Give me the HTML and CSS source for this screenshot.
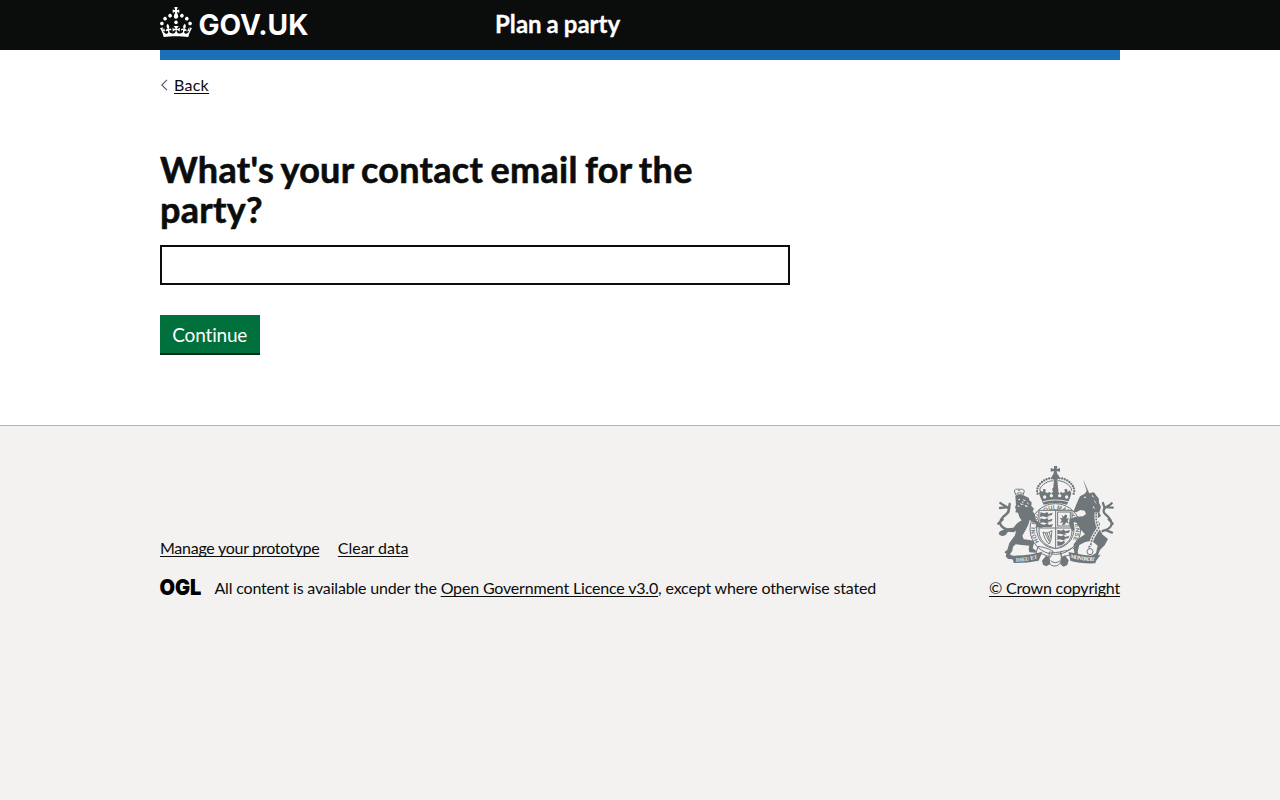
FILE: index.html
```html
<!DOCTYPE html>
<html lang="en">
<head>
<meta charset="utf-8">
<title>What's your contact email for the party? – Plan a party – GOV.UK</title>
<link rel="stylesheet" href="styles.css">
</head>
<body>
<header class="header">
  <div class="container header-inner">
    <a class="header-logo" href="#" aria-label="GOV.UK">
      <svg width="150" height="30" viewBox="0 0 150 30" fill="currentColor">
        <path d="M22.6 10.4c-1 .4-2-.1-2.4-1-.4-.9.1-2 1-2.4.9-.4 2 .1 2.4 1s-.1 2-1 2.4m-5.9 6.7c-.9.4-2-.1-2.4-1-.4-.9.1-2 1-2.4.9-.4 2 .1 2.4 1s-.1 2-1 2.4m10.8-3.7c-1 .4-2-.1-2.4-1-.4-.9.1-2 1-2.4.9-.4 2 .1 2.4 1s0 2-1 2.4m3.3 4.8c-1 .4-2-.1-2.4-1-.4-.9.1-2 1-2.4.9-.4 2 .1 2.4 1s-.1 2-1 2.4M17 4.7l2.3 1.2V2.5l-2.3.7-.2-.2.9-3h-3.4l.9 3-.2.2c-.1.1-2.3-.7-2.3-.7v3.4L15 4.7c.1.1.1.2.2.2l-1.3 4c-.1.2-.1.4-.1.6 0 1.1.8 2 1.9 2.2h.7c1-.2 1.9-1.1 1.9-2.1 0-.2 0-.4-.1-.6l-1.3-4c-.1-.2 0-.2.1-.3m-7.6 5.7c.9.4 2-.1 2.4-1 .4-.9-.1-2-1-2.4-.9-.4-2 .1-2.4 1s0 2 1 2.4m-5 3c.9.4 2-.1 2.4-1 .4-.9-.1-2-1-2.4-.9-.4-2 .1-2.4 1s.1 2 1 2.4m-3.2 4.8c.9.4 2-.1 2.4-1 .4-.9-.1-2-1-2.4-.9-.4-2 .1-2.4 1s0 2 1 2.4m14.8 11c4.4 0 8.6.3 12.3.8 1.1-4.5 2.4-7 3.7-8.8l-2.5-.9c.2 1.3.3 1.9 0 2.7-.4-.4-.8-1.1-1.1-2.3l-1.2 4c.7-.5 1.3-.8 2-.9-1.1 2.5-2.6 3.1-3.5 3-1.1-.2-1.7-1.2-1.5-2.1.3-1.2 1.5-1.5 2.1-.1 1.1-2.3-.8-3-2-2.3 1.9-1.9 2.1-3.5.6-5.6-2.1 1.6-2.1 3.2-1.2 5.5-1.2-1.4-3.2-.6-2.5 1.6.9-1.4 2.1-.5 1.9.8-.2 1.1-1.7 2.1-3.5 1.9-2.7-.2-2.9-2.1-2.9-3.6.7-.1 1.9.5 2.9 1.9l.4-4.3c-1.1 1.1-2.1 1.4-3.2 1.4.4-1.2 2.1-3 2.1-3h-5.4s1.7 1.9 2.1 3c-1.1 0-2.1-.2-3.2-1.4l.4 4.3c1-1.4 2.2-2 2.9-1.9-.1 1.5-.2 3.4-2.9 3.6-1.9.2-3.4-.8-3.5-1.9-.2-1.3 1-2.2 1.9-.8.7-2.3-1.2-3-2.5-1.6.9-2.2.9-3.9-1.2-5.5-1.5 2-1.3 3.7.6 5.6-1.2-.7-3.1 0-2 2.3.6-1.4 1.8-1.1 2.1.1.2.9-.3 1.9-1.5 2.1-.9.2-2.4-.5-3.5-3 .6 0 1.2.3 2 .9l-1.2-4c-.3 1.1-.7 1.9-1.1 2.3-.3-.8-.2-1.4 0-2.7l-2.9.9C1.3 23 2.6 25.5 3.7 30c3.7-.5 7.9-.8 12.3-.8"/>
        <text class="wordmark" x="38.4" y="28" textLength="110" lengthAdjust="spacingAndGlyphs">GOV.UK</text>
      </svg>
    </a>
    <a class="header-service" href="#">Plan a party</a>
  </div>
</header>
<div class="container page">
  <a class="back" href="#"><svg class="chevron" width="8" height="12" viewBox="0 0 8 12" fill="none" stroke="#505a5f" stroke-width="1.1"><path d="M7 .8 1.8 6 7 11.2"/></svg><span class="link">Back</span></a>
  <main class="main">
    <h1 class="title"><label for="email">What's your contact email for the party?</label></h1>
    <input class="input" id="email" type="text">
    <button class="button">Continue</button>
  </main>
</div>
<footer class="footer">
  <div class="container footer-inner">
    <div class="footer-meta">
      <div class="footer-links"><a class="link manage" href="#">Manage your prototype</a><a class="link clear" href="#">Clear data</a></div>
      <div class="licence">
        <svg class="ogl" width="42" height="18" viewBox="0 0 42 18"><text class="ogl-text" x="-.6" y="17" textLength="42" lengthAdjust="spacingAndGlyphs">OGL</text></svg>
        <span class="licence-text">All content is available under the <a class="link" href="#">Open Government Licence v3.0</a>, except where otherwise stated</span>
      </div>
    </div>
    <a class="copyright" href="#">
      <svg class="arms" width="130" height="112" viewBox="0 0 390 336">
        <!-- crown -->
        <g class="solid">
          <path d="M192 18h10l-2 9 10-3v11l-10-2 2 10c7 4 7 12 0 16h-12c-6-4-6-12 0-16l2-10-10 2V24l10 3z"/>
          <path d="M192 58h10l4 46h-18z"/>
          <path d="M147 100l4-9 7 5 2-9 7 1-1 9 8 2c4-5 6-3 9 2l6-6-3-9 9-5 10 5-3 9 7 6c3-5 5-7 8-2l8-2-2-9 8-1 2 9 7-5 4 9-4 14-9 20q-34-10-70 0l-9-20z"/>
        </g>
        <g class="dots"><path d="M143 101c-9-20 18-49 46-46M251 101c9-20-18-49-46-46"/></g>
        <g class="line"><path d="M149 92c0-14 20-29 41-30M245 92c0-14-20-29-41-30"/></g>
        <g class="pale"><circle cx="164" cy="111" r="5"/><circle cx="184" cy="107" r="5"/><circle cx="209" cy="107" r="5"/><circle cx="230" cy="111" r="5"/><path class="pale-line" d="M159 125q37-10 77 0"/></g>
        <!-- garter -->
        <g class="line"><ellipse cx="196" cy="207" rx="76" ry="76"/><ellipse cx="196" cy="207" rx="56" ry="58"/></g>
        <path id="garter" class="none" d="M147 245A61 61 0 1 1 245 245"/>
        <text class="motto"><textPath href="#garter" textLength="262">HONI SOIT QUI MAL Y PENSE</textPath></text>
        <!-- shield -->
        <path class="shield" d="M147 151h99v61c0 29-19 45-49 54-31-9-50-25-50-54z"/>
        <g class="line"><path d="M197 151v115M147 204h99"/></g>
        <g class="solid">
          <path d="M151 157l13 3 8-4 3 6 13-4-3 8-13 2 6 4h-9l-10-3-9 2zM151 175l13 3 8-4 3 6 13-4-3 8-13 2 6 4h-9l-10-3-9 2zM151 192l12 2 9-4 5 5 12-3-4 9h-34z"/>
          <path d="M202 209l12 3 8-4 3 6 15-4-3 8-13 2 6 4h-9l-10-3-9 2zM202 226l12 3 8-4 3 6 13-4-3 8-13 2 6 4h-9l-10-3-7 2zM202 243l12 3 8-4 3 6-10 8-13 2z"/>
          <path d="M214 164l7 6 5-7 6 4-3 9 8-2-4 9 4 9-8-5-6 8-7-1 4-8-10 4 5-9-6-7 9 1z"/>
        </g>
        <g class="line"><rect x="203" y="156" width="38" height="42"/><path d="M159 216c10 5 18 1 27-4-3 14 0 29-9 40-7-6-14-17-18-36M165 219l14 28M171 219l9 22M178 217l4 16"/></g>
        <!-- lion -->
        <path class="line" d="M78 106l-5-13c3-9 12-6 14 0 2-6 12-9 16 0l-4 13q-10-5-21 0M87 92v-7M80 100q8-4 18 0"/>
        <g class="solid">
          <path d="M76 108q14-7 27-1l13 6 3 9 6 5-1 11 8 8-4 8 6 8 4 19 17 12 5 8-6 2-11-2-7 4 3-12-20-13-4 14-10 20-8 13 4 11 13 1 16 3 2 8-4 15 9 6 1 7-20-1-2-11 2-9-23-2-18-2-8 7-2 12-7 11 9 7 6 1-1 7-20-1-7-8 2-8-6-4 9-8 6-20 17-23 3-13-8 4-16-2-7 10-10 4-9-5-2-6 10-5 17-8 17-2 12-14 13-8-6-8-5-15-8-1 2-8-3-7 3-7z"/>
        </g>
        <g class="pale"><path d="M83 118l7-2-1 5zM90 130l12 3-8 2zM99 117l10 6-8-1zM104 134l11 5-8 2zM82 136l8 3-5 2zM96 124l7 3-7 1zM112 126l6 8-7-4z"/></g>
        <g class="tail"><path d="M58 211c-31-9-34-26-19-40 12-10 19-13 17-24-3-9-16-10-25-18M48 142l-18 2M57 148l2-16M38 178l-13 13M47 210l-15 7"/></g>
        <!-- unicorn -->
        <g class="solid">
          <path d="M279 58l18 40-4 3z"/>
          <path d="M265 119l5-10 14-8 8-10 4 9 16-3 8 11 6 7 1 13 6 13-5 17 5 10-12 8 9 15-2 15 10 18 16 13-10 19-14 14-7 18-13 6-5-7 13-8 5-22-7-6-11-9-19 4-18 9-5 20 3 12-14 5-7-5 8-9-2-25 12-15 22-15-14-15-11-20-10-1 3 22-7 5-9-23 2-14 18-7 22-1 9-7-4-10-13-2-12 7-9-2z"/>
        </g>
        <g class="pale"><path d="M280 113l6-4 2 5zM305 103l8 10-6-3zM313 119l7 13-6-6zM310 138l6 10-8-6z"/></g>
        <g class="tail"><path d="M338 213c32-8 32-26 17-42-11-10-18-14-12-25 6-8 15-8 22-16M344 145l-5-16M350 141l18 2M356 178l12 13M346 210l20 8"/></g>
        <path class="chain-edge" d="M319 157c-2 19 0 33 7 47-9 14-20 27-22 43s-11 12-5 19"/>
        <path class="chain" d="M319 157c-2 19 0 33 7 47-9 14-20 27-22 43s-11 12-5 19"/>
        <circle class="line" cx="300" cy="275" r="9"/>
        <!-- motto scroll -->
        <path class="solid" d="M54 285l18 2q47-1 85-12l-11 27q-36 8-75 7l-2-9zM236 276q44 11 78 11l18-3-14 19-2 7q-43 2-75-8zM156 302l12-15 11 7 2 18-12 7-10-5zM212 294l12-8 12 15-4 14-12 5-9-8z"/>
        <g class="line"><path d="M144 259c23 4 35 8 45 15l-8 18q-24-14-43-12zM178 276q19 3 34 0l3 21c0 25-39 30-39 2zM211 275q22-1 38-12l10 15-44 14zM182 302q13 12 29 0"/></g>
        <path id="left-scroll" class="none" d="M78 305q39-1 70-12"/>
        <path id="right-scroll" class="none" d="M241 293q42 11 77 10"/>
        <text class="scroll-text"><textPath href="#left-scroll" textLength="66">DIEU ET</textPath></text>
        <text class="scroll-text"><textPath href="#right-scroll" textLength="74">MON DROIT</textPath></text>
      </svg>
      <span class="link">© Crown copyright</span>
    </a>
  </div>
</footer>
</body>
</html>
```
FILE: styles.css
```css
* { box-sizing: border-box; }
body {
  margin: 0;
  min-height: 100vh;
  display: flex;
  flex-direction: column;
  background: #fff;
  color: #0b0c0c;
  font: 16px/20px Lato, "Liberation Sans", sans-serif;
}
a { color: inherit; text-decoration: none; }
svg { display: block; overflow: visible; }
.container { width: 960px; margin: 0 auto; }
.link { text-decoration: underline; text-decoration-thickness: 1px; text-underline-offset: 2px; text-decoration-skip-ink: none; }

.header { height: 50px; background: #0b0c0c; color: #fff; }
.header-inner { display: flex; height: 60px; border-bottom: 10px solid #1d70b8; }
.header-logo { width: 335px; padding-top: 7px; }
.wordmark { font: 700 29px Inter, sans-serif; }
.header-service { font-size: 24px; line-height: 30px; font-weight: 700; letter-spacing: .05px; word-spacing: -1px; padding-top: 9px; -webkit-text-stroke: .3px; }

.page { padding-top: 25px; }
.back { display: flex; align-items: center; gap: 6px; height: 20px; width: 60px; letter-spacing: .27px; }
.chevron { margin-top: 0; }
.main { width: 630px; padding: 54px 0 70px; }
.title { margin: 0 0 16px; font-size: 36px; line-height: 40px; font-weight: 700; letter-spacing: .3px; word-spacing: -1.8px; -webkit-text-stroke: .6px; }
.input { display: block; width: 630px; height: 40px; border: 2px solid #0b0c0c; border-radius: 0; margin: 0 0 30px; padding: 5px; font: inherit; }
.button { display: block; width: 99.5px; height: 38px; border: 0; padding: 0; background: #00703c; color: #fff; box-shadow: 0 2px 0 #002d18; font: 19px/37px Lato, sans-serif; margin-bottom: 2px; letter-spacing: -.18px; }

.footer { flex: 1; background: #f3f2f1; border-top: 1px solid #b1b4b6; padding-top: 34px; }
.footer-inner { display: flex; justify-content: space-between; align-items: flex-end; }
.footer-meta { padding-bottom: 1px; }
.footer-links { display: flex; gap: 18.5px; margin-bottom: 20px; }
.manage { letter-spacing: -.26px; }
.clear { letter-spacing: -.03px; }
.licence { display: flex; gap: 12.4px; align-items: flex-start; }
.ogl-text { font: 900 22px Inter, sans-serif; }
.licence-text { letter-spacing: -.17px; }
.copyright { display: flex; flex-direction: column; align-items: flex-end; gap: 6px; padding-bottom: 1px; letter-spacing: -.19px; }

.solid { fill: #6f777b; }
.pale { fill: #f3f2f1; }
.pale-line { fill: none; stroke: #f3f2f1; stroke-width: 2.5; }
.none { fill: none; }
.line { fill: none; stroke: #6f777b; stroke-width: 3; }
.dots { fill: none; stroke: #6f777b; stroke-width: 7; stroke-linecap: round; stroke-dasharray: 0 8; }
.chain-edge { fill: none; stroke: #f3f2f1; stroke-width: 10; }
.chain { fill: none; stroke: #6f777b; stroke-width: 5; stroke-dasharray: 6 3; }
.shield { fill: #f3f2f1; stroke: #6f777b; stroke-width: 3; }
.tail { fill: none; stroke: #6f777b; stroke-width: 7; stroke-linecap: round; stroke-linejoin: round; }
.motto { font: 700 17px "Liberation Sans", sans-serif; fill: #6f777b; }
.scroll-text { font: 700 16px "Liberation Serif", serif; fill: #f3f2f1; }
```
